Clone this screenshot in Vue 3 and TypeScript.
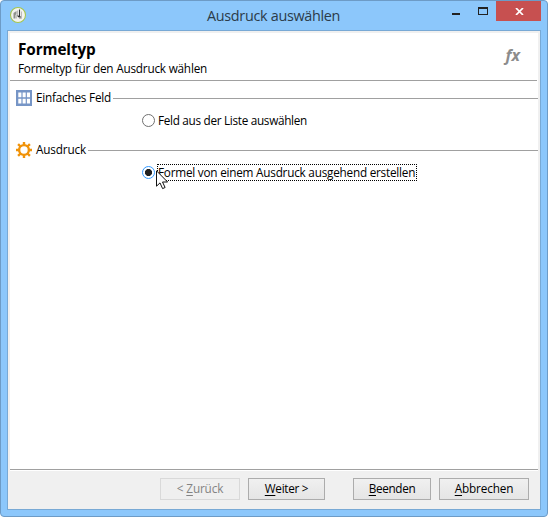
<script setup lang="ts">
import { ref } from 'vue'

type Mode = 'field' | 'expression'

interface WizardButton {
  id: string
  before: string
  key: string
  after: string
  disabled?: boolean
}

const mode = ref<Mode>('expression')

const buttons: WizardButton[] = [
  { id: 'back', before: '< ', key: 'Z', after: 'urück', disabled: true },
  { id: 'next', before: '', key: 'W', after: 'eiter >' },
  { id: 'finish', before: '', key: 'B', after: 'eenden' },
  { id: 'cancel', before: '', key: 'A', after: 'bbrechen' },
]
</script>

<template>
  <div class="window">
    <header class="titlebar">
      <svg class="app-icon" width="18" height="18" viewBox="0 0 18 18">
        <circle cx="9" cy="9" r="7.5" fill="#f3f3f0" stroke="#a5c64e" stroke-width="1.1" />
        <path d="M4.5 7 7.5 5V8L6.5 9V12.5H4.5Z" fill="#8e918c" />
        <path d="M7.5 8.5V12.5" stroke="#c5c5c2" />
        <path d="M10.5 3.5V10.5M8.5 9.5 10 11H12" stroke="#333" stroke-width="1.1" fill="none" />
        <path d="M8.5 4.5V9M12.5 5.5V12.5H10" stroke="#bbb" fill="none" />
      </svg>
      <h1 class="caption">Ausdruck auswählen</h1>
      <div class="controls">
        <svg class="minmax" width="44" height="20" viewBox="0 0 44 20" shape-rendering="crispEdges">
          <rect x="0" y="12" width="8" height="2" fill="#222" />
          <path d="M26 6h10v8h-10z M27 8v5h8v-5z" fill="#222" fill-rule="evenodd" />
        </svg>
        <button class="close" aria-label="Schließen">
          <svg width="9" height="7" viewBox="0 0 9 7">
            <path d="M1 0 8 7M8 0 1 7" stroke="#fff" stroke-width="1.7" />
          </svg>
        </button>
      </div>
    </header>

    <main class="client">
      <div class="page">
        <div class="intro">
          <div>
            <h2>Formeltyp</h2>
            <p>Formeltyp für den Ausdruck wählen</p>
          </div>
          <span class="fx">fx</span>
        </div>

        <div class="group">
          <svg width="16" height="16" viewBox="0 0 16 16">
            <rect width="16" height="16" fill="#7695c6" />
            <path
              d="M2.3 2.4h3.1v4.8H2.3zM6.6 2.4h3.1v4.8H6.6zM10.9 2.4h3.1v4.8h-3.1zM2.3 8.7h3.1v4.8H2.3zM6.6 8.7h3.1v4.8H6.6zM10.9 8.7h3.1v4.8h-3.1z"
              fill="#fff"
            />
          </svg>
          <span class="t-field">Einfaches Feld</span>
          <i class="rule"></i>
        </div>
        <div class="option" @click="mode = 'field'">
          <span class="radio" :class="{ checked: mode === 'field' }"></span>
          <span class="label" :class="{ focused: mode === 'field' }"><span class="t-list">Feld aus der Liste auswählen</span></span>
        </div>

        <div class="group">
          <svg width="16" height="16" viewBox="0 0 16 16">
            <circle cx="8" cy="8" r="4.9" fill="none" stroke="#f0930a" stroke-width="2.4" />
            <path
              d="M8 0V3M8 13V16M0 8H3M13 8H16M2.1 2.1 4.5 4.5M11.5 11.5 13.9 13.9M2.1 13.9 4.5 11.5M11.5 4.5 13.9 2.1"
              stroke="#f0930a"
              stroke-width="2.4"
            />
          </svg>
          <span class="t-expr">Ausdruck</span>
          <i class="rule"></i>
        </div>
        <div class="option" @click="mode = 'expression'">
          <span class="radio" :class="{ checked: mode === 'expression' }"></span>
          <span class="label" :class="{ focused: mode === 'expression' }"><span class="t-formula">Formel von einem Ausdruck ausgehend erstellen</span></span>
        </div>
      </div>

      <footer class="actions">
        <button v-for="b in buttons" :key="b.id" :class="['btn', b.id]" :disabled="b.disabled">
          <span>{{ b.before }}<u>{{ b.key }}</u>{{ b.after }}</span>
        </button>
      </footer>
    </main>

    <svg class="pointer" width="13" height="20" viewBox="0 0 13 20">
      <path d="M.5.8V16.2L4 12.9 6.6 18.6 9.1 17.5 6.5 12H11.6Z" fill="#fff" stroke="#111" />
    </svg>
  </div>
</template>

<style>
body {
  background: #fff;
}
</style>

<style scoped>
.window {
  position: relative;
  box-sizing: border-box;
  width: 548px;
  height: 517px;
  display: flex;
  flex-direction: column;
  padding: 0 6px 6px;
  border: 1px solid #6d9bc6;
  border-radius: 4px;
  background: #8cc7fb;
  font: 11.75px/16px 'Open Sans', 'Noto Sans', sans-serif;
  color: #000;
}
h1,
h2,
p {
  margin: 0;
}
.titlebar {
  display: flex;
  height: 29px;
  flex: none;
}
.app-icon {
  margin: 5px 0 0 2px;
}
.caption {
  flex: 1;
  padding: 5px 0 0 180px;
  font-size: 14.4px;
  font-weight: 400;
  line-height: 20px;
  letter-spacing: -0.31px;
  color: #2b3b49;
  white-space: nowrap;
}
.controls {
  display: flex;
  width: 89px;
  flex: none;
}
.minmax {
  flex: none;
}
.close {
  display: flex;
  align-items: center;
  justify-content: center;
  width: 45px;
  height: 20px;
  padding: 1px 0 0 1px;
  box-sizing: border-box;
  border: 0;
  background: #c75050;
}
.client {
  flex: 1;
  display: flex;
  flex-direction: column;
  padding: 2px 2px 0;
  border: 1px solid #78a9d5;
  background: #f0f0f0;
}
.page {
  flex: 1;
  border-bottom: 1px solid #a0a0a0;
  background: #fff;
}
.intro {
  display: flex;
  justify-content: space-between;
  box-sizing: border-box;
  height: 48px;
  margin-right: 1px;
  padding: 5px 17px 0 8px;
  border-bottom: 1px solid #a0a0a0;
}
h2 {
  font-size: 15.3px;
  line-height: 22px;
  font-weight: 700;
  letter-spacing: -0.1px;
}
p {
  letter-spacing: -0.2px;
}
.fx {
  padding-top: 7px;
  font-size: 16px;
  line-height: 20px;
  font-weight: 700;
  font-style: italic;
  color: #8c8c8c;
}
.group {
  display: flex;
  align-items: center;
  height: 16px;
  padding-left: 6px;
  margin-top: 9px;
  white-space: nowrap;
}
.group svg {
  margin-right: 4px;
  flex: none;
}
.group span {
  padding-bottom: 2px;
  line-height: 14px;
}
.t-field {
  width: 75px;
  letter-spacing: -0.22px;
}
.t-expr {
  width: 50px;
  letter-spacing: -0.15px;
}
.t-list {
  letter-spacing: -0.3px;
}
.t-formula {
  letter-spacing: -0.225px;
}
.rule {
  flex: 1;
  height: 1px;
  margin-left: 2px;
  background: #a0a0a0;
}
.option {
  display: flex;
  align-items: center;
  height: 17px;
  margin-top: 6px;
  padding-left: 132px;
}
.option + .group {
  margin-top: 13px;
}
.radio {
  box-sizing: border-box;
  width: 13px;
  height: 13px;
  margin-right: 2px;
  border: 1px solid #707070;
  border-radius: 50%;
  background: #fff;
}
.radio.checked {
  border-color: #3399ff;
  background: radial-gradient(circle, #212121 3.2px, #fff 3.9px);
}
.label {
  box-sizing: border-box;
  height: 17px;
  padding: 0 1px;
  line-height: 14px;
  border: 1px solid transparent;
  border-left-width: 0;
  white-space: nowrap;
}
.label.focused {
  border: 1px dotted #000;
  padding-left: 0;
}
.actions {
  display: flex;
  height: 39px;
  flex: none;
  box-sizing: border-box;
  padding: 7px 0 0 150px;
  border-top: 1px solid #fff;
}
.btn {
  box-sizing: border-box;
  height: 22px;
  padding: 0 0 2px;
  border: 1px solid #acacac;
  background: linear-gradient(#f0f0f0, #e5e5e5);
  font: inherit;
  line-height: 18px;
  letter-spacing: -0.15px;
  color: #000;
  white-space: nowrap;
}
.btn:disabled {
  border-color: #d9d9d9;
  background: #efefef;
  color: #838383;
}
.btn u {
  text-underline-offset: 2px;
  text-decoration-skip-ink: none;
}
.back {
  width: 80px;
}
.next {
  width: 77px;
  margin-left: 8px;
  letter-spacing: -0.3px;
}
.finish {
  width: 78px;
  margin-left: 28px;
  letter-spacing: -0.35px;
}
.cancel {
  width: 90px;
  margin-left: 8px;
}
.pointer {
  position: absolute;
  left: 155px;
  top: 169px;
}
</style>
